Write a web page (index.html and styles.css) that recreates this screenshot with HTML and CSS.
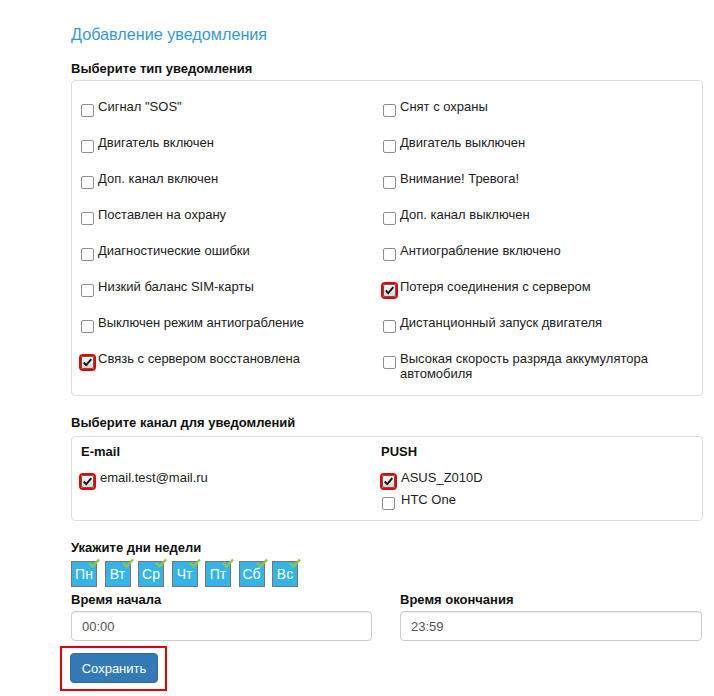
FILE: index.html
```html
<!DOCTYPE html>
<html lang="ru">
<head>
<meta charset="utf-8">
<title>Добавление уведомления</title>
<link rel="stylesheet" href="styles.css">
</head>
<body>
<div class="page">
  <h4 class="title">Добавление уведомления</h4>

  <div class="label label-types">Выберите тип уведомления</div>
  <div class="panel types">
    <div class="item"><span class="cb"></span><span class="txt">Сигнал "SOS"</span></div>
    <div class="item"><span class="cb"></span><span class="txt">Снят с охраны</span></div>
    <div class="item"><span class="cb"></span><span class="txt">Двигатель включен</span></div>
    <div class="item"><span class="cb"></span><span class="txt">Двигатель выключен</span></div>
    <div class="item"><span class="cb"></span><span class="txt">Доп. канал включен</span></div>
    <div class="item"><span class="cb"></span><span class="txt">Внимание! Тревога!</span></div>
    <div class="item"><span class="cb"></span><span class="txt">Поставлен на охрану</span></div>
    <div class="item"><span class="cb"></span><span class="txt">Доп. канал выключен</span></div>
    <div class="item"><span class="cb"></span><span class="txt">Диагностические ошибки</span></div>
    <div class="item"><span class="cb"></span><span class="txt">Антиограбление включено</span></div>
    <div class="item"><span class="cb"></span><span class="txt">Низкий баланс SIM-карты</span></div>
    <div class="item"><span class="cb cb-on"><svg viewBox="0 0 13 13" width="11" height="11"><path d="M2 6.5 L5 9.5 L11 2.5" fill="none" stroke="#111" stroke-width="2.2"/></svg></span><span class="txt">Потеря соединения с сервером</span></div>
    <div class="item"><span class="cb"></span><span class="txt">Выключен режим антиограбление</span></div>
    <div class="item"><span class="cb"></span><span class="txt">Дистанционный запуск двигателя</span></div>
    <div class="item"><span class="cb cb-on"><svg viewBox="0 0 13 13" width="11" height="11"><path d="M2 6.5 L5 9.5 L11 2.5" fill="none" stroke="#111" stroke-width="2.2"/></svg></span><span class="txt">Связь с сервером восстановлена</span></div>
    <div class="item"><span class="cb"></span><span class="txt">Высокая скорость разряда аккумулятора автомобиля</span></div>
  </div>

  <div class="label label-chan">Выберите канал для уведомлений</div>
  <div class="panel chan">
    <div class="chan-col">
      <div class="chan-head">E-mail</div>
      <div class="item citem first"><span class="cb cb-on"><svg viewBox="0 0 13 13" width="11" height="11"><path d="M2 6.5 L5 9.5 L11 2.5" fill="none" stroke="#111" stroke-width="2.2"/></svg></span><span class="txt">email.test@mail.ru</span></div>
    </div>
    <div class="chan-col push">
      <div class="chan-head">PUSH</div>
      <div class="item citem first"><span class="cb cb-on"><svg viewBox="0 0 13 13" width="11" height="11"><path d="M2 6.5 L5 9.5 L11 2.5" fill="none" stroke="#111" stroke-width="2.2"/></svg></span><span class="txt">ASUS_Z010D</span></div>
      <div class="item citem next"><span class="cb"></span><span class="txt">HTC One</span></div>
    </div>
  </div>

  <div class="label label-days">Укажите дни недели</div>
  <div class="days">
    <span class="day">Пн<svg class="tick" viewBox="0 0 12 10"><path d="M1 5 L4.5 8.5 L11 1.5" fill="none" stroke="#8dc63f" stroke-width="2.4"/></svg></span>
    <span class="day">Вт<svg class="tick" viewBox="0 0 12 10"><path d="M1 5 L4.5 8.5 L11 1.5" fill="none" stroke="#8dc63f" stroke-width="2.4"/></svg></span>
    <span class="day">Ср<svg class="tick" viewBox="0 0 12 10"><path d="M1 5 L4.5 8.5 L11 1.5" fill="none" stroke="#8dc63f" stroke-width="2.4"/></svg></span>
    <span class="day">Чт<svg class="tick" viewBox="0 0 12 10"><path d="M1 5 L4.5 8.5 L11 1.5" fill="none" stroke="#8dc63f" stroke-width="2.4"/></svg></span>
    <span class="day">Пт<svg class="tick" viewBox="0 0 12 10"><path d="M1 5 L4.5 8.5 L11 1.5" fill="none" stroke="#8dc63f" stroke-width="2.4"/></svg></span>
    <span class="day">Сб<svg class="tick" viewBox="0 0 12 10"><path d="M1 5 L4.5 8.5 L11 1.5" fill="none" stroke="#8dc63f" stroke-width="2.4"/></svg></span>
    <span class="day">Вс<svg class="tick" viewBox="0 0 12 10"><path d="M1 5 L4.5 8.5 L11 1.5" fill="none" stroke="#8dc63f" stroke-width="2.4"/></svg></span>
  </div>

  <div class="times">
    <div class="tcol">
      <div class="label">Время начала</div>
      <input class="inp" type="text" value="00:00">
    </div>
    <div class="tcol">
      <div class="label">Время окончания</div>
      <input class="inp" type="text" value="23:59">
    </div>
  </div>

  <div class="save-wrap"><button class="btn" type="button">Сохранить</button></div>
</div>
</body>
</html>
```

FILE: styles.css
```css
* { box-sizing: border-box; }

body {
  margin: 0;
  background: #fff;
  font-family: "Liberation Sans", Arial, sans-serif;
  font-size: 13px;
  color: #222;
}

.page {
  width: 632px;
  margin-left: 71px;
  padding-top: 24px;
}

.title {
  margin: 0;
  font-size: 16.2px;
  line-height: 20px;
  font-weight: normal;
  color: #3499d8;
}

.label {
  font-weight: bold;
  line-height: 16px;
  color: #111;
}

.label-types { margin-top: 17px; }
.label-chan { margin-top: 19px; }
.label-days { margin-top: 19px; }

.panel {
  border: 1px solid #ddd;
  border-radius: 4px;
  background: #fff;
}

.types {
  margin-top: 3px;
  padding: 18px 10px 14px 9px;
  display: grid;
  grid-template-columns: 302px 1fr;
  row-gap: 18px;
}

.item {
  display: flex;
  align-items: flex-start;
  gap: 4px;
  line-height: 15px;
}

.cb {
  flex: none;
  width: 13px;
  height: 13px;
  margin-top: 5px;
  border: 1px solid #8e8e8e;
  border-radius: 2px;
  background: #fff;
}

.cb-on {
  outline: 2px solid #e80000;
  border-color: #5e5e5e;
  background: linear-gradient(#f6f6f6, #d8d8d8);
}

.cb-on svg {
  display: block;
  margin: 0;
}

.chan {
  margin-top: 5px;
  padding: 7px 10px 10px 9px;
  display: grid;
  grid-template-columns: 300px 1fr;
}

.chan-head {
  font-weight: bold;
  line-height: 16px;
  color: #111;
}

.citem { gap: 6px; }
.citem.first { margin-top: 10px; }
.citem.next { margin-top: 4px; }
.push .citem { margin-left: 1px; }

.days {
  display: flex;
  gap: 7.5px;
  margin-top: 5px;
}

.day {
  position: relative;
  width: 26px;
  height: 26px;
  display: flex;
  align-items: center;
  justify-content: center;
  background: #35b4e8;
  border: 1px solid #767676;
  color: #fff;
  font-size: 14px;
}

.tick {
  position: absolute;
  right: -4px;
  top: -4px;
  width: 12px;
  height: 10px;
}

.times {
  display: grid;
  grid-template-columns: 301px 302px;
  column-gap: 28px;
  margin-top: 5px;
}

.inp {
  display: block;
  width: 100%;
  height: 30px;
  margin-top: 3px;
  padding: 0 10px;
  border: 1px solid #ccc;
  border-radius: 4px;
  box-shadow: inset 0 1px 1px rgba(0, 0, 0, .075);
  font-family: "Liberation Sans", Arial, sans-serif;
  font-size: 13px;
  color: #555;
  background: #fff;
}

.save-wrap {
  display: inline-block;
  margin: 5px 0 0 -11px;
  border: 2px solid #e80000;
  padding: 5px 7px 6px 8px;
}

.btn {
  display: block;
  width: 88px;
  height: 30px;
  padding: 0;
  background: #337ab7;
  border: 1px solid #2e6da4;
  border-radius: 4px;
  color: #fff;
  font-family: "Liberation Sans", Arial, sans-serif;
  font-size: 13px;
}
```
